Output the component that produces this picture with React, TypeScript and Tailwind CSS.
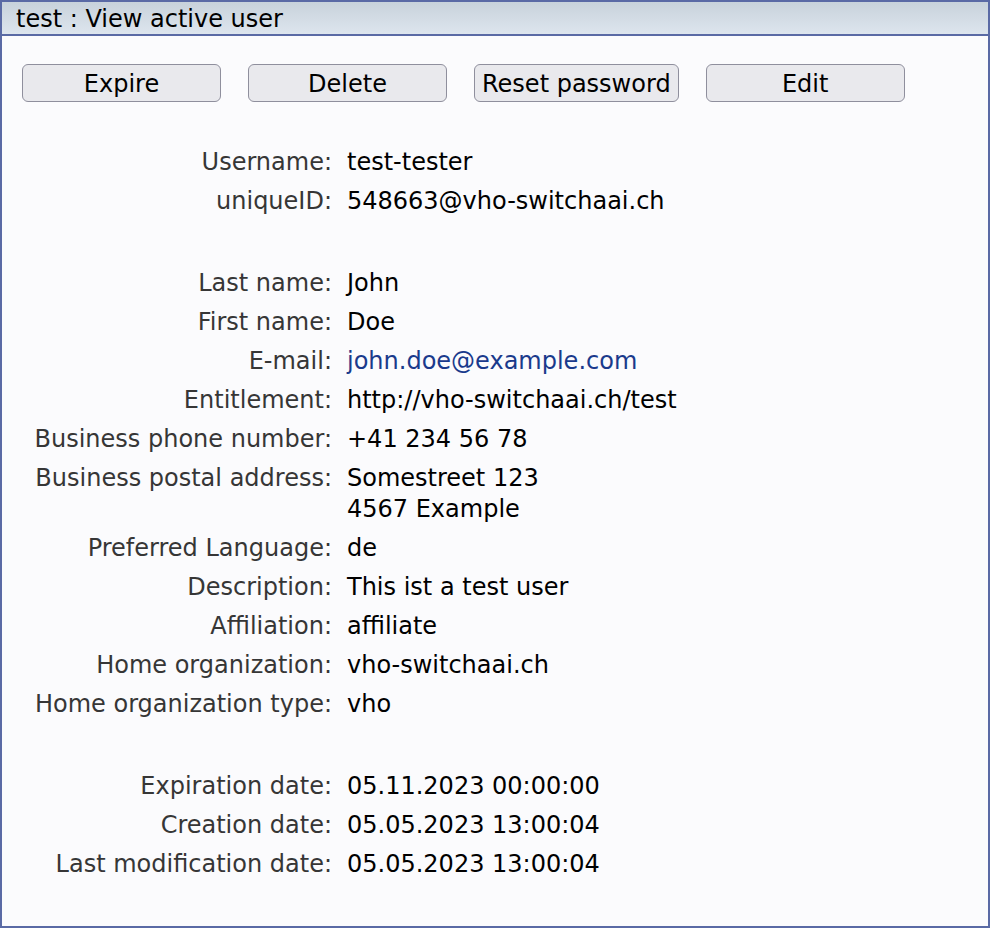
import React from "react";

type Row = { label: string; value: React.ReactNode; link?: boolean };

const group1: Row[] = [
  { label: "Username:", value: "test-tester" },
  { label: "uniqueID:", value: "548663@vho-switchaai.ch" },
];

const group2: Row[] = [
  { label: "Last name:", value: "John" },
  { label: "First name:", value: "Doe" },
  { label: "E-mail:", value: "john.doe@example.com", link: true },
  { label: "Entitlement:", value: "http://vho-switchaai.ch/test" },
  { label: "Business phone number:", value: "+41 234 56 78" },
  {
    label: "Business postal address:",
    value: (
      <>
        Somestreet 123
        <br />
        4567 Example
      </>
    ),
  },
  { label: "Preferred Language:", value: "de" },
  { label: "Description:", value: "This ist a test user" },
  { label: "Affiliation:", value: "affiliate" },
  { label: "Home organization:", value: "vho-switchaai.ch" },
  { label: "Home organization type:", value: "vho" },
];

const group3: Row[] = [
  { label: "Expiration date:", value: "05.11.2023 00:00:00" },
  { label: "Creation date:", value: "05.05.2023 13:00:04" },
  { label: "Last modification date:", value: "05.05.2023 13:00:04" },
];

function Rows({ rows }: { rows: Row[] }) {
  return (
    <>
      {rows.map((r) => (
        <React.Fragment key={r.label}>
          <div className="text-right text-[#363636] py-1 leading-[31px]">{r.label}</div>
          <div className="py-1 leading-[31px] text-black">
            {r.link ? (
              <a href="#" className="text-[#1a3a8c] no-underline">
                {r.value}
              </a>
            ) : (
              r.value
            )}
          </div>
        </React.Fragment>
      ))}
    </>
  );
}

function Btn({ children }: { children: React.ReactNode }) {
  return (
    <button className="h-[38px] min-w-[199px] px-[7px] pt-[2px] rounded-[6px] border-[1.5px] border-[#8f8f9d] bg-[#e9e9ed] text-[24px] leading-none text-black">
      {children}
    </button>
  );
}

export default function App() {
  return (
    <div
      className="w-[990px] h-[928px] border-2 border-[#5a6aa5] bg-[#fbfbfd] flex flex-col text-[24px]"
      style={{ fontFamily: '"DejaVu Sans", Verdana, sans-serif' }}
    >
      <div className="h-[34px] border-b-2 border-[#5a6aa5] bg-gradient-to-b from-[#c8d2db] to-[#dde5ee] flex items-center pl-[14px] pt-[2px] text-black leading-none">
        test : View active user
      </div>
      <div className="pt-[28px] pl-[20px] flex gap-[27px]">
        <Btn>Expire</Btn>
        <Btn>Delete</Btn>
        <Btn>Reset password</Btn>
        <Btn>Edit</Btn>
      </div>
      <div className="mt-[41px] grid grid-cols-[330px_1fr] gap-x-[15px]">
        <Rows rows={group1} />
        <div className="h-[43px] col-span-2" />
        <Rows rows={group2} />
        <div className="h-[43px] col-span-2" />
        <Rows rows={group3} />
      </div>
    </div>
  );
}
